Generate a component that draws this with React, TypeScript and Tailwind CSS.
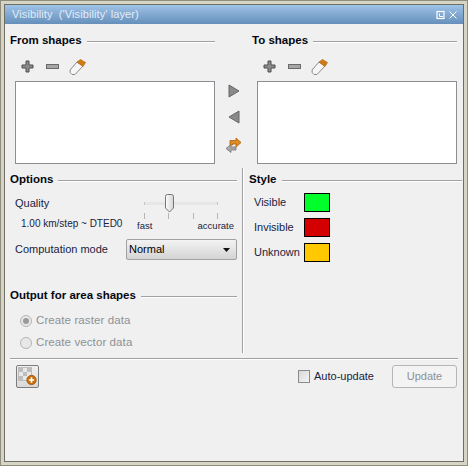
const font = { fontFamily: '"Liberation Sans", Arial, sans-serif' };

function Heading({ label, className = "" }: { label: string; className?: string }) {
  return (
    <div className={`flex items-center h-[14px] ${className}`}>
      <span className="text-[11.5px] font-bold text-[#05070f] whitespace-nowrap leading-none">{label}</span>
      <div className="ml-[5px] mt-[2px] flex-1 h-[2px] border-t border-t-[#a0a0a0] border-b border-b-white" />
    </div>
  );
}

function Plus() {
  return (
    <svg width="14" height="14" viewBox="0 0 14 14">
      <path d="M5 1h3v4h4v3H8v4H5V8H1V5h4z" fill="#8c8c8c" stroke="#4f4f4f" strokeWidth="1" />
    </svg>
  );
}
function Minus() {
  return (
    <svg width="14" height="6" viewBox="0 0 14 6">
      <rect x="0.5" y="0.5" width="12" height="4" fill="#a6a6a6" stroke="#6a6a6a" />
    </svg>
  );
}
function Eraser() {
  return (
    <svg width="17" height="16" viewBox="0 0 17 16">
      <path d="M1 11 L8 3 L14 7 L6 15.5 H3 Q0.5 14 1 11 Z" fill="#f6f6f6" stroke="#8a8a8a" />
      <path d="M8 3 L11.5 0.5 L16.5 3.5 L14 7.5 Z" fill="#d07c16" stroke="#b4660e" strokeWidth="0.7" />
    </svg>
  );
}
function Toolbar({ className = "" }: { className?: string }) {
  return (
    <div className={`flex items-center h-[16px] ${className}`}>
      <Plus />
      <div className="w-[11px]" />
      <Minus />
      <div className="w-[9px]" />
      <Eraser />
    </div>
  );
}
function ListBox({ className = "" }: { className?: string }) {
  return <div className={`h-[83px] w-[200px] bg-white border border-[#8b8f94] ${className}`} />;
}
function Tri({ left }: { left?: boolean }) {
  return (
    <svg width="12" height="14" viewBox="0 0 12 14">
      <path d={left ? "M11 1V13L1 7Z" : "M1 1V13L11 7Z"} fill="#8a8a8a" stroke="#666" />
    </svg>
  );
}
function Swap() {
  return (
    <svg width="17" height="17" viewBox="0 0 17 17">
      <path d="M1 11.5 L6 7.5 V10 H11 V13 H6 V15.5 Z" fill="#a8a8a8" stroke="#7a7a7a" strokeWidth="0.8" />
      <path d="M16 5.5 L11 1 V3.5 H5 V8 H7.5 V7 H11 V10 Z" fill="#dd8a22" stroke="#a8610f" strokeWidth="0.8" />
    </svg>
  );
}
function Slider() {
  return (
    <div className="relative w-[74px] h-[26px]">
      <div className="absolute left-0 right-0 top-[8px] h-[3px] bg-[#e4e7e4] border-x border-[#c5c5c5]" />
      <svg className="absolute left-[20px] top-0" width="11" height="19" viewBox="0 0 11 19">
        <defs>
          <linearGradient id="thumb" x1="0" y1="0" x2="1" y2="0">
            <stop offset="0" stopColor="#fdfdfd" />
            <stop offset="1" stopColor="#d4d4d4" />
          </linearGradient>
        </defs>
        <path d="M1.5 2.5 Q1.5 0.5 3.5 0.5 H7.5 Q9.5 0.5 9.5 2.5 V14 L5.5 18 L1.5 14Z" fill="url(#thumb)" stroke="#767676" />
      </svg>
      <div className="absolute left-0 right-0 top-[19px] flex justify-between">
        <div className="w-px h-[6px] bg-[#b5b5b5]" />
        <div className="w-px h-[6px] bg-[#b5b5b5]" />
        <div className="w-px h-[6px] bg-[#b5b5b5]" />
        <div className="w-px h-[6px] bg-[#b5b5b5]" />
      </div>
    </div>
  );
}
function Radio({ label, checked }: { label: string; checked?: boolean }) {
  return (
    <div className="flex items-center h-[14px]">
      <div className="w-[12px] h-[12px] rounded-full border border-[#b5b5b5] bg-[#e8e8e8] flex items-center justify-center">
        {checked && <div className="w-[6px] h-[6px] rounded-full bg-[#9a9a9a]" />}
      </div>
      <span className="ml-[4px] text-[11.5px] leading-none text-[#8e9196] tracking-[0.1px]">{label}</span>
    </div>
  );
}
function StyleRow({ label, swatch }: { label: string; swatch: string }) {
  return (
    <div className="flex items-center h-[19px]">
      <span className="w-[50px] text-[11px] leading-none text-[#1a2340]">{label}</span>
      <div className={`w-[26px] h-[19px] border border-black ${swatch}`} />
    </div>
  );
}
function AddLayerIcon() {
  return (
    <svg width="19" height="19" viewBox="0 0 19 19">
      <rect x="0.5" y="0.5" width="13" height="13" fill="#e8e8e8" stroke="#bdbdbd" />
      <rect x="1" y="1" width="4" height="4" fill="#bdbdbd" />
      <rect x="9" y="1" width="4" height="4" fill="#bdbdbd" />
      <rect x="5" y="5" width="4" height="4" fill="#bdbdbd" />
      <rect x="1" y="9" width="4" height="4" fill="#bdbdbd" />
      <circle cx="13.5" cy="13" r="4.7" fill="#c86f0c" stroke="#a35708" strokeWidth="0.8" />
      <path d="M13.5 10.3v5.4M10.8 13h5.4" stroke="#fff" strokeWidth="1.6" />
    </svg>
  );
}

export default function App() {
  return (
    <div style={font} className="w-[468px] h-[466px] bg-[#8f8e7c] p-px">
      <div className="w-full h-full bg-[#d6d4c4] p-[3px]">
        <div className="w-full h-full bg-[#f0f0f0] border border-[#6e6e62] flex flex-col">
          <div className="h-[19px] shrink-0 flex items-center pl-[7px] pr-[5px] bg-gradient-to-b from-[#9fc2e8] to-[#6590bb]">
            <span className="text-[11px] leading-none text-[#e2ecf6] whitespace-pre tracking-[0.1px]">Visibility  ('Visibility' layer)</span>
            <div className="flex-1" />
            <svg width="10" height="10" viewBox="0 0 10 10">
              <rect x="1" y="1.5" width="7" height="7" fill="none" stroke="#fff" strokeWidth="1.2" />
              <path d="M3.5 3.5V6.5H7" fill="none" stroke="#fff" />
            </svg>
            <svg className="ml-[2px]" width="10" height="10" viewBox="0 0 10 10">
              <path d="M1.5 1.5L8.5 8.5M8.5 1.5L1.5 8.5" stroke="#fff" strokeWidth="1" />
            </svg>
          </div>

          <div className="pl-[5px] pt-[10px] flex">
            <div className="w-[205px]">
              <Heading label="From shapes" />
              <Toolbar className="mt-[11px] ml-[11px]" />
              <ListBox className="mt-[6px] ml-[5px]" />
            </div>
            <div className="w-[37px] pt-[50px] flex flex-col items-center">
              <Tri />
              <div className="h-[12px]" />
              <Tri left />
              <div className="h-[13px]" />
              <Swap />
            </div>
            <div className="w-[205px]">
              <Heading label="To shapes" />
              <Toolbar className="mt-[11px] ml-[11px]" />
              <ListBox className="mt-[6px] ml-[5px]" />
            </div>
          </div>

          <div className="pl-[5px] mt-[4px] flex h-[186px]">
            <div className="w-[232px] pt-[5px] pr-[5px]">
              <Heading label="Options" />
              <div className="mt-[8px] pl-[5px] flex">
                <div className="w-[122px] pt-[3px] text-[11px] leading-none text-[#1a2340]">
                  <div className="h-[14px]">Quality</div>
                  <div className="ml-[6px] mt-[7px] text-[10px] whitespace-nowrap">1.00 km/step ~ DTED0</div>
                </div>
                <div className="w-[97px] -mt-[1px]">
                  <div className="pl-[7px]"><Slider /></div>
                  <div className="flex justify-between text-[9.5px] leading-none text-[#1a2340] mt-[1px]">
                    <span>fast</span>
                    <span>accurate</span>
                  </div>
                </div>
              </div>
              <div className="mt-[8px] pl-[5px] flex items-center h-[21px]">
                <span className="w-[111px] text-[11px] leading-none text-[#1a2340]">Computation mode</span>
                <div className="w-[111px] h-[21px] border border-[#a0a0a0] rounded-[2px] bg-gradient-to-b from-[#f3f3f3] to-[#d4d4d4] flex items-center pl-[2px] pr-[6px]">
                  <span className="text-[11px] leading-none text-black">Normal</span>
                  <div className="flex-1" />
                  <svg width="7" height="4" viewBox="0 0 7 4" className="mt-[2px]"><path d="M0 0H7L3.5 4Z" fill="#111" /></svg>
                </div>
              </div>
              <Heading label="Output for area shapes" className="mt-[29px]" />
              <div className="mt-[11px] pl-[10px] flex flex-col gap-[8px]">
                <Radio label="Create raster data" checked />
                <Radio label="Create vector data" />
              </div>
            </div>
            <div className="w-[2px] h-[185px] border-l border-l-[#a0a0a0] border-r border-r-white" />
            <div className="flex-1 pt-[5px] pl-[5px] pr-[1px]">
              <Heading label="Style" />
              <div className="mt-[6px] pl-[5px] flex flex-col gap-[6px]">
                <StyleRow label="Visible" swatch="bg-[#00ff2a]" />
                <StyleRow label="Invisible" swatch="bg-[#d40000]" />
                <StyleRow label="Unknown" swatch="bg-[#ffc800]" />
              </div>
            </div>
          </div>

          <div className="ml-[5px] mr-[5px] mt-[4px] h-[2px] border-t border-t-[#a0a0a0] border-b border-b-white" />

          <div className="mt-[5px] pl-[11px] pr-[6px] flex items-center">
            <div className="w-[23px] h-[23px] border border-[#7d7d7d] rounded-[2px] bg-gradient-to-b from-[#f0f0f0] to-[#d8d8d8] flex items-center justify-center">
              <AddLayerIcon />
            </div>
            <div className="flex-1" />
            <div className="w-[12px] h-[13px] border border-[#8b8b8b] bg-gradient-to-br from-[#d8d8d8] to-[#f4f4f4]" />
            <span className="ml-[4px] text-[11px] leading-none text-[#1a2340] w-[74px]">Auto-update</span>
            <div className="ml-[4px] w-[65px] h-[23px] border border-[#b5b5b5] rounded-[3px] bg-[#f3f3f3] flex items-center justify-center text-[11px] leading-none text-[#8e9196]">
              Update
            </div>
          </div>
        </div>
      </div>
    </div>
  );
}
